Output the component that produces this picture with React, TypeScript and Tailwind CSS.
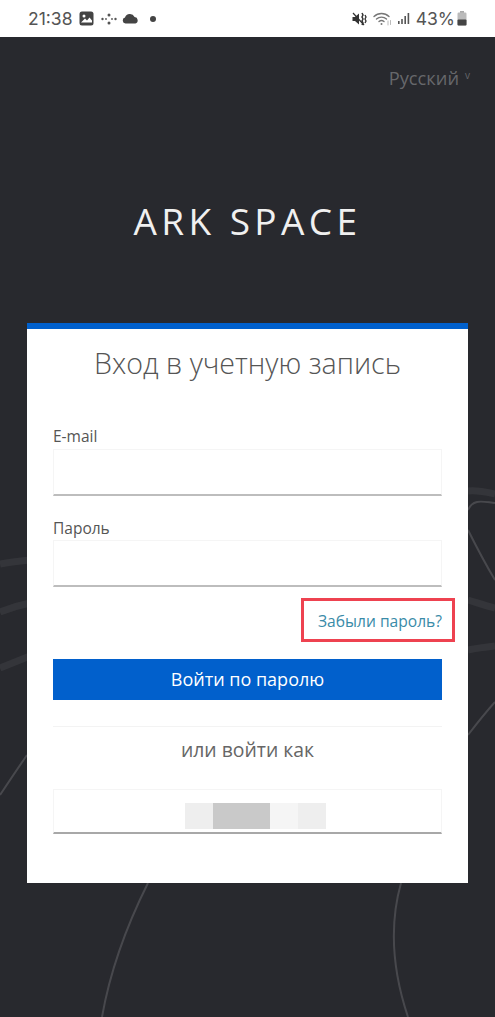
import React from "react";

const font = { fontFamily: '"Open Sans", "Noto Sans", sans-serif' };

function StatusBar() {
  return (
    <div className="relative z-10 flex h-[37px] items-center justify-between bg-white pl-[28px] pr-[28px] text-[#555555]" style={{ fontFamily: 'Inter, "Liberation Sans", sans-serif' }}>
      <div className="flex items-center">
        <span className="text-[17.5px] leading-none">21:38</span>
        <svg width="15" height="15" viewBox="0 0 15 15" className="ml-[7px]">
          <rect x="0.5" y="0.5" width="14" height="14" rx="2.5" fill="#444" />
          <circle cx="5" cy="5" r="1.5" fill="#fff" />
          <path d="M2 11.5 L6 7.5 L8 9.5 L10.5 6.5 L13 9.5 V11.5 Z" fill="#fff" />
        </svg>
        <svg width="16" height="12" viewBox="0 0 16 12" className="ml-[7px]" fill="#555">
          <circle cx="8" cy="2" r="1.5" /><circle cx="8" cy="10" r="1.5" />
          <circle cx="1.5" cy="6" r="1.2" /><circle cx="5" cy="6" r="0.9" />
          <circle cx="11" cy="6" r="0.9" /><circle cx="14.5" cy="6" r="1.2" />
        </svg>
        <svg width="17" height="11" viewBox="0 0 17 11" className="ml-[5px]" fill="#444">
          <path d="M3.5 10.5 A3 3 0 0 1 3 4.6 A5.2 5.2 0 0 1 12.6 3.9 A3.4 3.4 0 0 1 13.4 10.5 Z" />
        </svg>
        <span className="ml-[11px] h-[6px] w-[6px] rounded-full bg-[#444]" />
      </div>
      <div className="flex items-center">
        <svg width="15" height="14" viewBox="0 0 15 14" fill="#333">
          <path d="M0.5 5 H3 L7 1.5 V12.5 L3 9 H0.5 Z" />
          <path d="M1 1 L12 13" stroke="#333" strokeWidth="1.2" />
          <path d="M10 1 l1 2 -1 2 1 2 -1 2 1 2 -1 2" fill="none" stroke="#333" strokeWidth="1.5" />
          <path d="M13 3 l1 2 -1 2 1 2 -1 2" fill="none" stroke="#333" strokeWidth="1.3" />
        </svg>
        <svg width="19" height="15" viewBox="0 0 19 15" className="ml-[6px]" fill="none" stroke="#777" strokeLinecap="round">
          <path d="M1 5.5 A11 11 0 0 1 16 5.5" strokeWidth="1.4" />
          <path d="M3.5 8 A7.5 7.5 0 0 1 13.5 8" strokeWidth="1.4" />
          <path d="M6 10.5 A4 4 0 0 1 11 10.5" strokeWidth="1.4" />
          <circle cx="8.5" cy="13" r="1" fill="#777" stroke="none" />
          <path d="M15 10 v4 M17.5 9.5 v4" strokeWidth="1" stroke="#bbb" />
        </svg>
        <svg width="14" height="13" viewBox="0 0 14 13" className="ml-[5px]" fill="#555">
          <rect x="1" y="9" width="1.6" height="3" /><rect x="4.2" y="7" width="1.6" height="5" />
          <rect x="7.4" y="4" width="1.6" height="8" /><rect x="10.6" y="1" width="1.6" height="11" />
        </svg>
        <span className="ml-[5px] text-[17.5px] leading-none">43%</span>
        <svg width="10" height="15" viewBox="0 0 10 15" className="ml-[2px]">
          <rect x="3" y="0" width="4" height="2" fill="#aaa" />
          <rect x="0.5" y="1.5" width="9" height="13" rx="1.2" fill="#bbb" />
          <rect x="0.5" y="8.5" width="9" height="6" rx="1" fill="#444" />
        </svg>
      </div>
    </div>
  );
}

function Field({ label, mt, gap }: { label: string; mt: string; gap: string }) {
  return (
    <div className={mt}>
      <div className="text-[15.5px] leading-[20px] text-[#555]">{label}</div>
      <div className={`${gap} h-[47px] border border-b-2 border-[#f5f5f5] border-b-[#bdbdbd] bg-white`} />
    </div>
  );
}

export default function App() {
  return (
    <div className="relative h-[1017px] w-[495px] overflow-hidden bg-[#28292e]" style={font}>
      <svg className="absolute left-0 top-0" width="495" height="1017" viewBox="0 0 495 1017" fill="none">
        <g stroke="#ffffff" strokeOpacity="0.06" strokeWidth="7">
          <path d="M0 564 C10 562 20 561 30 560" />
          <path d="M0 612 C10 608 20 605 30 603" />
          <path d="M0 668 C10 664 20 660 30 656" />
          <path d="M468 491 C478 490 486 492 495 494" />
          <path d="M468 600 C478 603 486 606 495 608" />
          <path d="M468 650 C478 648 486 647 495 646" />
        </g>
        <g stroke="#ffffff" strokeOpacity="0.15" strokeWidth="2">
          <path d="M0 795 C10 780 18 768 27 755" />
          <path d="M468 510 C473 498 484 502 495 503" />
          <path d="M468 530 C478 550 486 565 495 580" />
          <path d="M468 735 C478 722 486 712 495 702" />
          <path d="M148 883 C132 915 112 960 102 1017" />
          <path d="M401 883 C392 915 389 960 408 1017" />
        </g>
      </svg>

      <StatusBar />

      <div className="relative flex flex-col">
        <div className="flex justify-end pr-[25px] pt-[29px] text-[18.3px] leading-[24px] text-[#66676b]">
          <span>Русский</span>
          <span className="ml-[6px] text-[10px] leading-[18px]">v</span>
        </div>

        <div className="mt-[106px] text-center text-[37px] font-normal leading-[50px] tracking-[4.4px] text-[#f0f0f0]">ARK SPACE</div>

        <div className="mx-[27px] mt-[77px] h-[560px] border-t-[6px] border-[#0160cc] bg-white px-[26px]">
          <div className="pt-[15px] text-center text-[28.6px] font-light leading-[38px] text-[#555]">Вход в учетную запись</div>

          <Field label="E-mail" mt="mt-[44px]" gap="mt-[3px]" />
          <Field label="Пароль" mt="mt-[22px]" gap="mt-[2px]" />

          <div className="mt-[24px] text-right text-[15.6px] leading-[20px] text-[#3a8ba8]">Забыли пароль?</div>

          <div className="mt-[28px] flex h-[41px] items-center justify-center bg-[#0160cc] text-[18px] text-white">Войти по паролю</div>

          <div className="mt-[26px] border-t border-[#f3f3f3] pt-[9px] text-center text-[19.4px] leading-[28px] text-[#666]">или войти как</div>

          <div className="mt-[25px] flex h-[45px] justify-center border border-b-2 border-[#f5f5f5] border-b-[#a8a8a8] pl-[16px] pt-[13px]">
            <div className="flex h-[26px]">
              <div className="w-[28px] bg-[#eeeeee]" />
              <div className="w-[57px] bg-[#c9c9c9]" />
              <div className="w-[28px] bg-[#f5f5f5]" />
              <div className="w-[28px] bg-[#eeeeee]" />
            </div>
          </div>
        </div>
      </div>

      <div className="absolute left-[301px] top-[598px] h-[44px] w-[154px] border-[3px] border-[#ee4250]" />
    </div>
  );
}
